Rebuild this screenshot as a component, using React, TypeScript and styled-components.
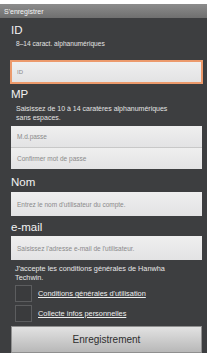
import styled, { createGlobalStyle } from "styled-components";

const GlobalStyle = createGlobalStyle`
  html, body {
    margin: 0;
    padding: 0;
    background: #ffffff;
  }
  body {
    font-family: "Liberation Sans", Arial, sans-serif;
  }
`;

const Screen = styled.div`
  width: 207px;
  height: 349px;
  margin-top: 4px;
  background: #3d3e40;
  overflow: hidden;
  display: flex;
  flex-direction: column;
`;

const TitleBar = styled.div`
  height: 15px;
  display: flex;
  align-items: center;
  padding-left: 4px;
  background: linear-gradient(#8c8c8c, #6f6f6f);
  color: #f4f4f4;
  font-size: 7px;
`;

const Form = styled.div`
  display: flex;
  flex-direction: column;
  padding: 0 5px 0 11px;
`;

const Label = styled.div<{ $top: number }>`
  margin-top: ${(p) => p.$top}px;
  font-size: 11.5px;
  line-height: 14px;
  color: #f2f2f2;
`;

const Hint = styled.div<{ $top: number; $size?: number }>`
  margin-top: ${(p) => p.$top}px;
  padding-left: 5px;
  font-size: ${(p) => p.$size ?? 6.6}px;
  line-height: 9px;
  color: #e4e4e4;
`;

const Field = styled.div<{ $top?: number; $focused?: boolean }>`
  margin-top: ${(p) => p.$top ?? 0}px;
  height: 24px;
  box-sizing: border-box;
  display: flex;
  align-items: center;
  padding-left: 6px;
  background: linear-gradient(#efefef, #e3e3e4);
  font-size: 6.5px;
  color: #8a8a8a;
  ${(p) =>
    p.$focused &&
    `
    margin-left: -1px;
    margin-right: -1px;
    border: 2px solid #ec9a6c;
    padding-left: 5px;
    font-size: 6px;
  `}
`;

const FieldGroup = styled.div`
  margin-top: 4px;
  display: flex;
  flex-direction: column;
`;

const GroupField = styled(Field)<{ $first?: boolean }>`
  height: ${(p) => (p.$first ? 22 : 21)}px;
  border-bottom: ${(p) => (p.$first ? "1px solid #c8c8c8" : "none")};
`;

const Terms = styled.div`
  margin-top: 4px;
  padding-left: 4px;
  font-size: 7.3px;
  line-height: 9px;
  color: #e8e8e8;
`;

const CheckRow = styled.div<{ $top: number }>`
  margin-top: ${(p) => p.$top}px;
  display: flex;
  align-items: center;
  gap: 6px;
  padding-left: 4px;
`;

const Box = styled.div`
  width: 17px;
  height: 17px;
  box-sizing: border-box;
  border: 1px solid #5c5d5f;
  background: #3a3b3d;
`;

const TermLink = styled.span`
  font-size: 7.4px;
  color: #f0f0f0;
  text-decoration: underline;
`;

const SubmitButton = styled.button`
  margin-top: 4px;
  height: 27px;
  border: 1px solid #8f8f8f;
  background: linear-gradient(#e2e2e2, #b8b8b8);
  font-family: "Liberation Sans", Arial, sans-serif;
  font-size: 10px;
  color: #2e2e2e;
  padding: 0;
`;

export default function App() {
  return (
    <>
      <GlobalStyle />
      <Screen>
        <TitleBar>S'enregistrer</TitleBar>
        <Form>
          <Label $top={5}>ID</Label>
          <Hint $top={2}>8–14 caract. alphanumériques</Hint>
          <Field $top={12} $focused>
            ID
          </Field>

          <Label $top={3}>MP</Label>
          <Hint $top={3} $size={7}>
            Saisissez de 10 à 14 caratères alphanumériques
            <br />
            sans espaces.
          </Hint>
          <FieldGroup>
            <GroupField $first>M.d.passe</GroupField>
            <GroupField>Confirmer mot de passe</GroupField>
          </FieldGroup>

          <Label $top={6}>Nom</Label>
          <Field $top={3}>Entrez le nom d'utilisateur du compte.</Field>

          <Label $top={4}>e-mail</Label>
          <Field $top={2}>Saisissez l'adresse e-mail de l'utilisateur.</Field>

          <Terms>
            J'accepte les conditions générales de Hanwha
            <br />
            Techwin.
          </Terms>
          <CheckRow $top={3}>
            <Box />
            <TermLink>Conditions générales d'utilisation</TermLink>
          </CheckRow>
          <CheckRow $top={3}>
            <Box />
            <TermLink>Collecte infos personnelles</TermLink>
          </CheckRow>

          <SubmitButton>Enregistrement</SubmitButton>
        </Form>
      </Screen>
    </>
  );
}
